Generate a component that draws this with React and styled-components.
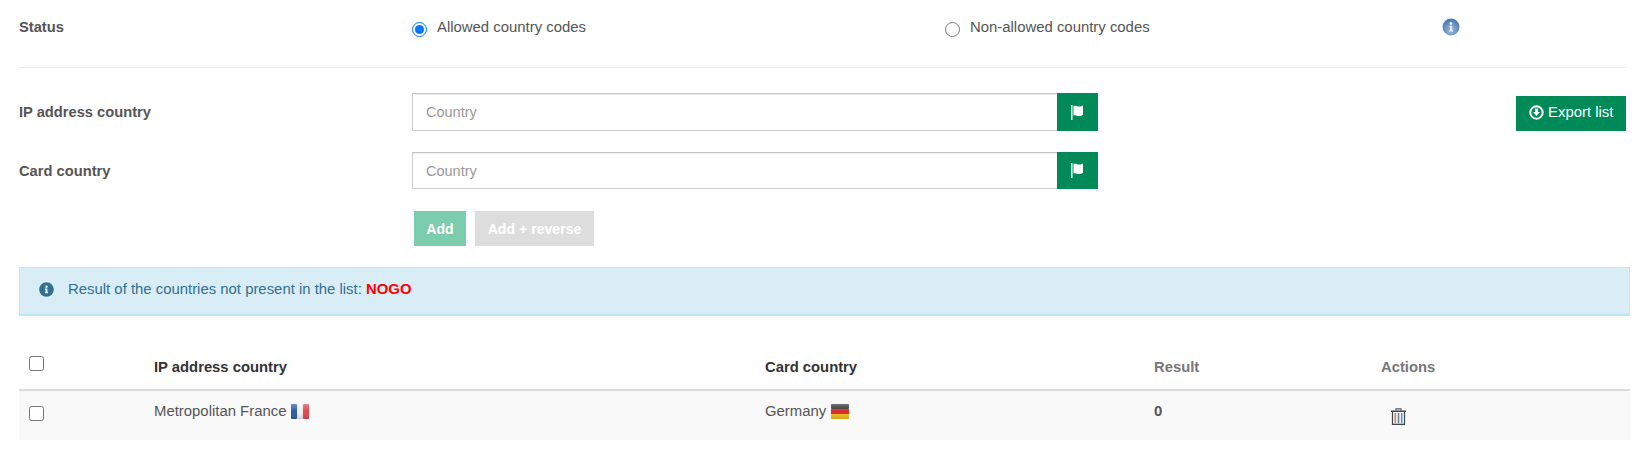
import React from "react";
import styled, { createGlobalStyle } from "styled-components";
import { FaInfoCircle } from "react-icons/fa";

const Global = createGlobalStyle`
  html, body {
    margin: 0;
    padding: 0;
    background: #fff;
    font-family: "Liberation Sans", Arial, sans-serif;
    font-size: 14.9px;
    color: #555;
  }
`;

const Page = styled.div`
  padding: 0 15px 0 19px;
`;

const StatusRow = styled.div`
  display: grid;
  grid-template-columns: 393px 533px 497px 1fr;
  height: 68px;
  padding-top: 18px;
  box-sizing: border-box;
  margin-right: 2px;
  border-bottom: 1px solid #eee;
`;

const Label = styled.div`
  font-size: 14.7px;
  font-weight: 700;
  color: #555;
  line-height: 18px;
`;

const RadioLabel = styled.label`
  display: flex;
  gap: 10px;
  line-height: 18px;
  color: #555;
`;

const Radio = styled.input.attrs({ type: "radio", readOnly: true })`
  width: 15px;
  height: 15px;
  margin: 4px 0 0 0;
  accent-color: #0075ff;
`;

const FormRow = styled.div`
  display: grid;
  grid-template-columns: 393px 686px 1fr;
  margin-top: ${(p) => p.$top}px;
  align-items: center;
`;

const InputGroup = styled.div`
  display: flex;
  height: ${(p) => p.$height}px;
`;

const CountryInput = styled.input`
  flex: 1;
  min-width: 0;
  box-sizing: border-box;
  border: 1px solid #ccc;
  border-right: 0;
  border-top-color: #c4c4c4;
  box-shadow: inset 0 1px 1px rgba(0, 0, 0, 0.075);
  padding: 0 13px;
  font: inherit;
  font-size: 14.5px;
  color: #555;
  outline: none;
  &::placeholder {
    color: #999;
    opacity: 1;
  }
`;

const AddOn = styled.div`
  width: 41px;
  background: #008a57;
  color: #fff;
  display: flex;
  align-items: center;
  justify-content: center;
`;

const RightCell = styled.div`
  display: flex;
  justify-content: flex-end;
  padding: 3px 4px 0 0;
`;

const ExportButton = styled.button`
  display: flex;
  align-items: center;
  gap: 4px;
  width: 110px;
  height: 35px;
  padding: 0 0 3px 13px;
  border: 0;
  background: #008a57;
  color: #fff;
  font: inherit;
`;

const Buttons = styled.div`
  display: flex;
  gap: 9px;
  margin: 22px 0 0 395px;
`;

const ActionButton = styled.button`
  height: 35px;
  width: ${(p) => p.$width}px;
  padding: 0;
  border: 0;
  background: ${(p) => p.$bg};
  color: #fff;
  font: inherit;
  font-size: 14.1px;
  font-weight: 700;
`;

const Alert = styled.div`
  display: flex;
  align-items: center;
  gap: 14px;
  box-sizing: border-box;
  height: 49px;
  margin-top: 21px;
  padding: 0 0 4px 19px;
  background: #d9edf7;
  border: 1px solid #bce8f1;
  border-bottom-width: 2px;
  color: #31708f;
`;

const Nogo = styled.strong`
  color: #f00;
`;

const Table = styled.table`
  width: 100%;
  margin-top: 25px;
  border-collapse: collapse;
  table-layout: fixed;
`;

const HeadCell = styled.th`
  height: 49px;
  padding: 3px 10px 0;
  width: ${(p) => (p.$width ? `${p.$width}px` : "auto")};
  box-sizing: border-box;
  text-align: left;
  font-size: 14.8px;
  font-weight: 700;
  color: ${(p) => (p.$muted ? "#777" : "#333")};
  border-bottom: 2px solid #ddd;
`;

const Row = styled.tr`
  background: #f9f9f9;
`;

const Cell = styled.td`
  height: 50px;
  box-sizing: border-box;
  padding: 0 10px 10px;
  color: #555;
  font-weight: ${(p) => (p.$strong ? 700 : 400)};
`;

const Box = styled.input.attrs({ type: "checkbox" })`
  display: block;
  width: 15px;
  height: 15px;
  margin: ${(p) => p.$margin};
`;

const WithFlag = styled.span`
  display: inline-flex;
  align-items: center;
  gap: 5px;
  svg {
    margin-top: 2px;
  }
`;

const TrashButton = styled.span`
  display: block;
  padding: 11px 0 0 10px;
  line-height: 0;
`;

const FlagIcon = () => (
  <svg width="14" height="15" viewBox="0 0 14 15">
    <rect x="0" y="0" width="1.500" height="15" fill="#fff" />
    <path d="M2.500 1c2.200-1 3.800.4 5.800.4 1.500 0 2.700-.5 3.700-1v9.400c-1 .7-2.300 1.300-3.800 1.300-2.200 0-3.600-1.500-5.700-.7z" fill="#fff" />
  </svg>
);

const DownCircleIcon = () => (
  <svg width="15" height="15" viewBox="0 0 15 15">
    <circle cx="7.500" cy="7.500" r="6.200" fill="none" stroke="#fff" strokeWidth="2" />
    <path d="M6 3.500h3v3.500h2l-3.500 4-3.500-4h2z" fill="#fff" />
  </svg>
);

const TrashIcon = () => (
  <svg width="15" height="17" viewBox="0 0 15 17">
    <path d="M5 2.500V.8h5v1.700" fill="none" stroke="#5a5f66" strokeWidth="1.200" />
    <rect x="0" y="2.500" width="15" height="1.500" fill="#3e4650" />
    <path d="M1.500 4v12.400h12V4" fill="none" stroke="#3e4650" strokeWidth="1.200" />
    <rect x="3.500" y="5" width="1.600" height="10.500" fill="#c9894f" />
    <rect x="6.700" y="5" width="1.600" height="10.500" fill="#6b7f96" />
    <rect x="9.900" y="5" width="1.600" height="10.500" fill="#5b93c4" />
  </svg>
);

const InfoBadge = () => (
  <svg width="18" height="18" viewBox="0 0 18 18">
    <defs>
      <radialGradient id="badge" cx="50%" cy="70%" r="60%">
        <stop offset="0%" stopColor="#9db9de" />
        <stop offset="100%" stopColor="#4f7db8" />
      </radialGradient>
    </defs>
    <circle cx="9" cy="9" r="8.500" fill="url(#badge)" />
    <circle cx="9" cy="5.500" r="1.400" fill="#e8eef7" />
    <path d="M7.500 7.700h2.700v4.500h.8v1.300H7.200v-1.300h.8v-3.200h-.5z" fill="#e8eef7" />
  </svg>
);

const Shine = ({ id }) => (
  <linearGradient id={id} x1="0" y1="0" x2="0" y2="1">
    <stop offset="0" stopColor="#fff" stopOpacity="0.3" />
    <stop offset="0.5" stopColor="#fff" stopOpacity="0" />
    <stop offset="1" stopColor="#000" stopOpacity="0.15" />
  </linearGradient>
);

const FranceFlag = () => (
  <svg width="18" height="15" viewBox="0 0 18 15">
    <defs><Shine id="fr" /></defs>
    <rect width="6" height="15" rx="1" fill="#2a5ca8" />
    <rect x="6" width="6" height="15" fill="#eef0f2" />
    <rect x="12" width="6" height="15" rx="1" fill="#e2454a" />
    <rect width="18" height="15" rx="1" fill="url(#fr)" />
  </svg>
);

const GermanyFlag = () => (
  <svg width="18" height="15" viewBox="0 0 18 15">
    <defs><Shine id="de" /></defs>
    <rect width="18" height="5" rx="1" fill="#333" />
    <rect y="5" width="18" height="5" fill="#dd2a2a" />
    <rect y="10" width="18" height="5" rx="1" fill="#edbd1e" />
    <rect width="18" height="15" rx="1" fill="url(#de)" />
  </svg>
);

export default function App() {
  return (
    <Page>
      <Global />
      <StatusRow>
        <Label>Status</Label>
        <RadioLabel>
          <Radio name="status" defaultChecked />
          Allowed country codes
        </RadioLabel>
        <RadioLabel>
          <Radio name="status" />
          Non-allowed country codes
        </RadioLabel>
        <InfoBadge />
      </StatusRow>

      <FormRow $top={25}>
        <Label>IP address country</Label>
        <InputGroup $height={38}>
          <CountryInput placeholder="Country" />
          <AddOn><FlagIcon /></AddOn>
        </InputGroup>
        <RightCell>
          <ExportButton>
            <DownCircleIcon />
            Export list
          </ExportButton>
        </RightCell>
      </FormRow>

      <FormRow $top={21}>
        <Label>Card country</Label>
        <InputGroup $height={37}>
          <CountryInput placeholder="Country" />
          <AddOn><FlagIcon /></AddOn>
        </InputGroup>
      </FormRow>

      <Buttons>
        <ActionButton $width={52} $bg="#7ccdad">Add</ActionButton>
        <ActionButton $width={119} $bg="#ddd">Add + reverse</ActionButton>
      </Buttons>

      <Alert>
        <FaInfoCircle size={15} color="#31708f" />
        <span>
          Result of the countries not present in the list: <Nogo>NOGO</Nogo>
        </span>
      </Alert>

      <Table>
        <thead>
          <tr>
            <HeadCell $width={125}><Box $margin="0 0 6px" /></HeadCell>
            <HeadCell $width={611}>IP address country</HeadCell>
            <HeadCell $width={389}>Card country</HeadCell>
            <HeadCell $width={227} $muted>Result</HeadCell>
            <HeadCell $muted>Actions</HeadCell>
          </tr>
        </thead>
        <tbody>
          <Row>
            <Cell><Box $margin="5px 0 0" /></Cell>
            <Cell><WithFlag>Metropolitan France <FranceFlag /></WithFlag></Cell>
            <Cell><WithFlag>Germany <GermanyFlag /></WithFlag></Cell>
            <Cell $strong>0</Cell>
            <Cell><TrashButton><TrashIcon /></TrashButton></Cell>
          </Row>
        </tbody>
      </Table>
    </Page>
  );
}
